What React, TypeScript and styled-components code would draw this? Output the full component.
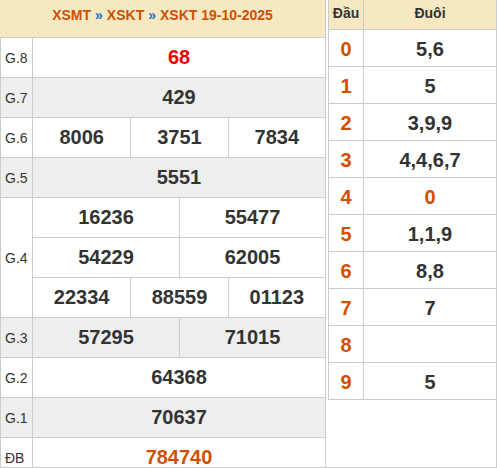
import React from "react";
import styled, { createGlobalStyle } from "styled-components";

const Global = createGlobalStyle`
  html, body { margin: 0; padding: 0; background: #fff; }
  body { font-family: "Liberation Sans", Arial, sans-serif; color: #333; }
  * { box-sizing: border-box; }
`;

const BORDER = "#cccccc";
const HEAD_BG = "#f6e9c2";
const ALT_BG = "#eeeeee";
const ORANGE = "#d04f00";

const Wrapper = styled.div`
  display: flex;
  width: 497px;
  height: 468px;
  overflow: hidden;
  border-bottom: 1px solid ${BORDER};
`;

const LeftPanel = styled.div`
  width: 326px;
  flex: none;
  border-right: 1px solid ${BORDER};
`;

const Header = styled.div`
  height: 38px;
  background: ${HEAD_BG};
  border-bottom: 1px solid ${BORDER};
  display: flex;
  align-items: center;
  justify-content: center;
  padding-bottom: 7px;
  font-size: 14px;
  font-weight: bold;
  color: ${ORANGE};
`;

const Sep = styled.span`
  color: #1e6fd0;
  margin: 0 4px;
`;

const Row = styled.div<{ $alt?: boolean; $rows?: number }>`
  display: flex;
  height: ${(p) => (p.$rows ?? 1) * 40}px;
  background: ${(p) => (p.$alt ? ALT_BG : "#fff")};
  border-left: 1px solid ${BORDER};
  border-bottom: 1px solid ${BORDER};
`;

const Label = styled.div`
  width: 32px;
  flex: none;
  border-right: 1px solid ${BORDER};
  display: flex;
  align-items: center;
  padding-left: 4px;
  font-size: 14px;
  color: #333;
`;

const Stack = styled.div`
  flex: 1;
  display: flex;
  flex-direction: column;
`;

const Values = styled.div<{ $cols: number; $line?: boolean }>`
  flex: 1;
  display: grid;
  grid-template-columns: repeat(${(p) => p.$cols}, 1fr);
  border-bottom: ${(p) => (p.$line ? `1px solid ${BORDER}` : "none")};
`;

const Num = styled.div<{ $color?: string }>`
  display: flex;
  align-items: center;
  justify-content: center;
  font-size: 20px;
  font-weight: bold;
  color: ${(p) => p.$color ?? "#333"};
  & + & {
    border-left: 1px solid ${BORDER};
  }
`;

const RightPanel = styled.div`
  flex: 1;
  padding-left: 2px;
  border-right: 1px solid ${BORDER};
`;

const LotoTable = styled.div`
  border-left: 1px solid ${BORDER};
`;

const LotoRow = styled.div<{ $head?: boolean }>`
  display: flex;
  height: ${(p) => (p.$head ? 30 : 37)}px;
  background: ${(p) => (p.$head ? HEAD_BG : "#fff")};
  border-bottom: 1px solid ${BORDER};
`;

const HeadCell = styled.div<{ $narrow?: boolean }>`
  width: ${(p) => (p.$narrow ? "35px" : "auto")};
  flex: ${(p) => (p.$narrow ? "none" : "1")};
  border-right: ${(p) => (p.$narrow ? `1px solid ${BORDER}` : "none")};
  display: flex;
  align-items: center;
  justify-content: center;
  padding-bottom: 4px;
  font-size: 14px;
  font-weight: bold;
  color: #333;
`;

const Dau = styled.div`
  width: 35px;
  flex: none;
  border-right: 1px solid ${BORDER};
  display: flex;
  align-items: center;
  justify-content: center;
  padding-top: 2px;
  font-size: 20px;
  font-weight: bold;
  color: ${ORANGE};
`;

const Duoi = styled.div<{ $special?: boolean }>`
  flex: 1;
  display: flex;
  align-items: center;
  justify-content: center;
  padding-top: 2px;
  font-size: 20px;
  font-weight: bold;
  color: ${(p) => (p.$special ? ORANGE : "#333")};
`;

type Prize = { label: string; groups: string[][]; color?: string };

const prizes: Prize[] = [
  { label: "G.8", groups: [["68"]], color: "#ee0000" },
  { label: "G.7", groups: [["429"]] },
  { label: "G.6", groups: [["8006", "3751", "7834"]] },
  { label: "G.5", groups: [["5551"]] },
  {
    label: "G.4",
    groups: [
      ["16236", "55477"],
      ["54229", "62005"],
      ["22334", "88559", "01123"],
    ],
  },
  { label: "G.3", groups: [["57295", "71015"]] },
  { label: "G.2", groups: [["64368"]] },
  { label: "G.1", groups: [["70637"]] },
  { label: "ĐB", groups: [["784740"]], color: ORANGE },
];

const loto: { d: string; t: string; special?: boolean }[] = [
  { d: "0", t: "5,6" },
  { d: "1", t: "5" },
  { d: "2", t: "3,9,9" },
  { d: "3", t: "4,4,6,7" },
  { d: "4", t: "0", special: true },
  { d: "5", t: "1,1,9" },
  { d: "6", t: "8,8" },
  { d: "7", t: "7" },
  { d: "8", t: "" },
  { d: "9", t: "5" },
];

export default function App() {
  return (
    <>
      <Global />
      <Wrapper>
        <LeftPanel>
          <Header>
            XSMT<Sep>»</Sep>XSKT<Sep>»</Sep>XSKT 19-10-2025
          </Header>
          {prizes.map((p, i) => (
            <Row key={p.label} $alt={i % 2 === 1} $rows={p.groups.length}>
              <Label>{p.label}</Label>
              <Stack>
                {p.groups.map((g, j) => (
                  <Values key={j} $cols={g.length} $line={j < p.groups.length - 1}>
                    {g.map((n) => (
                      <Num key={n} $color={p.color}>
                        {n}
                      </Num>
                    ))}
                  </Values>
                ))}
              </Stack>
            </Row>
          ))}
        </LeftPanel>
        <RightPanel>
          <LotoTable>
            <LotoRow $head>
              <HeadCell $narrow>Đầu</HeadCell>
              <HeadCell>Đuôi</HeadCell>
            </LotoRow>
            {loto.map((r) => (
              <LotoRow key={r.d}>
                <Dau>{r.d}</Dau>
                <Duoi $special={r.special}>{r.t}</Duoi>
              </LotoRow>
            ))}
          </LotoTable>
        </RightPanel>
      </Wrapper>
    </>
  );
}
